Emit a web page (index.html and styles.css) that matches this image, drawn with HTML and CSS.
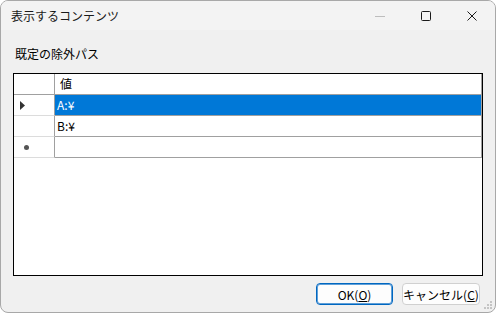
FILE: index.html
```html
<!DOCTYPE html>
<html lang="ja">
<head>
    <meta charset="UTF-8">
    <title>表示するコンテンツ</title>
    <link rel="stylesheet" href="styles.css">
</head>
<body>
    <div class="window">
        <div class="titlebar">
            <span class="title">表示するコンテンツ</span>
            <div class="controls">
                <span class="ctl min"><svg width="12" height="12" viewBox="0 0 12 12"><path d="M1 6.5h10" stroke="#bdbdbd" stroke-width="1"/></svg></span>
                <span class="ctl"><svg width="12" height="12" viewBox="0 0 12 12"><rect x="1.5" y="1.5" width="9" height="9" rx="1" fill="none" stroke="#1a1a1a" stroke-width="1"/></svg></span>
                <span class="ctl"><svg width="12" height="12" viewBox="0 0 12 12"><path d="M1.5 1.5l9 9M10.5 1.5l-9 9" stroke="#1a1a1a" stroke-width="1"/></svg></span>
            </div>
        </div>
        <div class="content">
            <div class="label">既定の除外パス</div>
            <div class="grid">
                <div class="row head">
                    <div class="rh"></div>
                    <div class="cell">値</div>
                </div>
                <div class="row">
                    <div class="rh"><svg width="6" height="9" viewBox="0 0 6 9"><path d="M0 0L5 4.5L0 9Z" fill="#333"/></svg></div>
                    <div class="cell selected">A:¥</div>
                </div>
                <div class="row">
                    <div class="rh"></div>
                    <div class="cell">B:¥</div>
                </div>
                <div class="row">
                    <div class="rh"><span class="star"></span></div>
                    <div class="cell"></div>
                </div>
            </div>
            <div class="buttons">
                <button class="btn default">OK(<u>O</u>)</button>
                <button class="btn">キャンセル(<u>C</u>)</button>
            </div>
        </div>
        <svg class="grip" width="9" height="9" viewBox="0 0 9 9">
            <rect x="7" y="1" width="2" height="2" fill="#c4c4c4"/>
            <rect x="4" y="4" width="2" height="2" fill="#c4c4c4"/>
            <rect x="7" y="4" width="2" height="2" fill="#c4c4c4"/>
            <rect x="1" y="7" width="2" height="2" fill="#c4c4c4"/>
            <rect x="4" y="7" width="2" height="2" fill="#c4c4c4"/>
            <rect x="7" y="7" width="2" height="2" fill="#c4c4c4"/>
        </svg>
    </div>
</body>
</html>
```

FILE: styles.css
```css
body {
    margin: 0;
    background: #ffffff;
    font-family: "Noto Sans CJK JP", "Noto Sans", sans-serif;
    font-size: 12px;
    color: #000;
}
.window {
    position: relative;
    width: 494px;
    height: 311px;
    border: 1px solid #a8a8a8;
    border-radius: 8px;
    background: #f0f0f0;
    overflow: hidden;
    display: flex;
    flex-direction: column;
}
.titlebar {
    height: 29px;
    background: #f3f3f3;
    display: flex;
    align-items: center;
    justify-content: space-between;
}
.title {
    padding-left: 10px;
    font-size: 12px;
    line-height: 16px;
    color: #1a1a1a;
}
.controls {
    display: flex;
    height: 29px;
}
.ctl {
    width: 46px;
    display: flex;
    align-items: center;
    justify-content: center;
}
.content {
    flex: 1;
    padding: 0 12px 0 12px;
    display: flex;
    flex-direction: column;
}
.label {
    margin-top: 16px;
    line-height: 16px;
    height: 16px;
    padding-left: 2px;
}
.grid {
    margin-top: 11px;
    width: 468px;
    height: 201px;
    border: 1px solid #000;
    background: #fff;
}
.row {
    display: flex;
    height: 21px;
}
.rh {
    border-right: 1px solid #a0a0a0;
    border-bottom: 1px solid #dcdcdc;
    display: flex;
    align-items: center;
    padding-left: 6px;
    width: 34px;
}
.cell {
    width: 424px;
    padding-left: 2px;
    border-right: 1px solid #a0a0a0;
    border-bottom: 1px solid #a0a0a0;
    line-height: 20px;
}
.head .rh,
.head .cell {
    border-bottom: 1px solid #a0a0a0;
}
.head .cell {
    padding-left: 5px;
    width: 421px;
}
.selected {
    background: #0078d7;
    color: #fff;
}
.star {
    display: block;
    width: 5px;
    height: 5px;
    margin-left: 4px;
    border-radius: 50%;
    background: #555;
}
.buttons {
    margin-top: 7px;
    display: flex;
    justify-content: flex-end;
    gap: 9px;
    padding-right: 3px;
}
.btn {
    height: 22px;
    width: 77px;
    padding: 0;
    font-family: inherit;
    font-size: 12px;
    background: #fdfdfd;
    border: 1px solid #d0d0d0;
    border-radius: 4px;
    color: #000;
}
.btn.default {
    border: 1px solid #0067c0;
    box-shadow: inset 0 0 0 1px #5f9fd8;
}
.btn:last-child {
    width: 78px;
}
.grip {
    position: absolute;
    right: 3px;
    bottom: 3px;
}
```
